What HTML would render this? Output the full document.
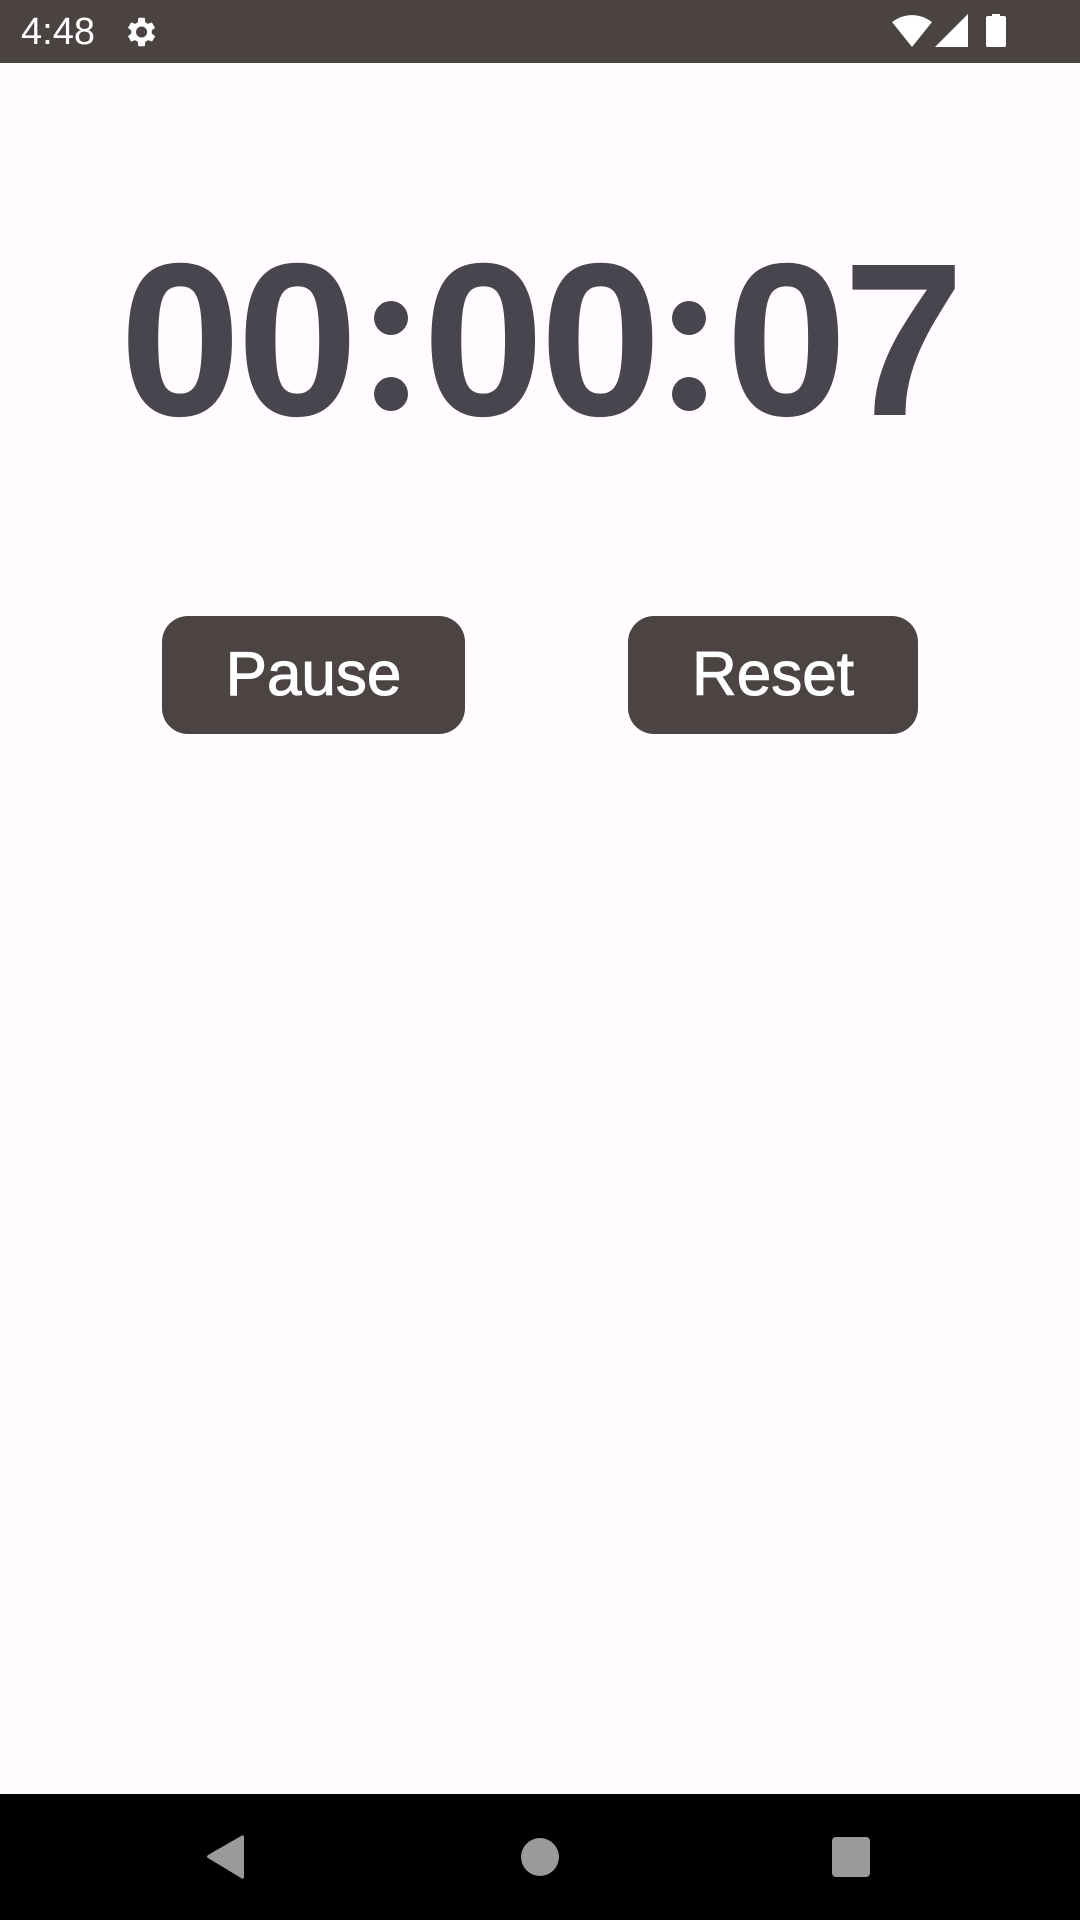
<!DOCTYPE html>
<html><head><meta charset="utf-8"><style>
html,body{margin:0;padding:0;width:1080px;height:1920px;overflow:hidden;background:#fffbfe;font-family:"Liberation Sans",sans-serif;}
.sb{position:absolute;left:0;top:0;width:1080px;height:63px;background:#4a4341;}
.time{position:absolute;left:21px;top:11px;color:#fff;font-size:38px;}
.timer{position:absolute;left:0;width:1080px;top:221px;text-align:center;font-size:218px;font-weight:bold;color:#49454f;letter-spacing:-4px;line-height:240px;}
.c{color:transparent;}
.dot{position:absolute;width:34px;height:34px;border-radius:50%;background:#49454f;}
.btn{position:absolute;top:616px;height:118px;background:#4b4442;border-radius:26px;color:#fff;font-size:62px;text-align:center;line-height:118px;-webkit-text-stroke:1px #fff;}
.nav{position:absolute;left:0;top:1794px;width:1080px;height:126px;background:#000;}
</style></head><body>
<div class="sb">
<div class="time">4:48</div>
<svg style="position:absolute;left:121px;top:13px" width="38" height="38" viewBox="0 0 24 24"><path fill="#fff" d="M19.4 13a7.5 7.5 0 0 0 0-2l2.1-1.6-2-3.5-2.5 1a7.3 7.3 0 0 0-1.7-1L15 3h-4l-.4 2.9a7.3 7.3 0 0 0-1.7 1l-2.5-1-2 3.5L6.5 11a7.5 7.5 0 0 0 0 2l-2.1 1.6 2 3.5 2.5-1a7.3 7.3 0 0 0 1.7 1L11 21h4l.4-2.9a7.3 7.3 0 0 0 1.7-1l2.5 1 2-3.5zM13 15.5a3.5 3.5 0 1 1 0-7 3.5 3.5 0 0 1 0 7z"/></svg>
<svg style="position:absolute;left:890px;top:14px" width="120" height="34" viewBox="0 0 120 34"><path fill="#fff" d="M2 8 Q22 -6 42 8 L22 33 Z"/><path fill="#fff" d="M45 33 L78 0 L78 33 Z"/><rect x="96" y="2" width="20" height="31" rx="2" fill="#fff"/><rect x="102" y="0" width="8" height="4" fill="#fff"/></svg>
</div>
<div class="timer">00<span class="c">:</span>00<span class="c">:</span>07</div>
<div class="dot" style="left:374px;top:301px"></div>
<div class="dot" style="left:374px;top:377px"></div>
<div class="dot" style="left:672px;top:301px"></div>
<div class="dot" style="left:672px;top:377px"></div>
<div class="btn" style="left:162px;width:303px;">Pause</div>
<div class="btn" style="left:628px;width:290px;">Reset</div>
<div class="nav">
<svg style="position:absolute;left:204px;top:40px" width="44" height="46" viewBox="0 0 44 46"><path d="M40 3 L40 43 Q40 46 37 44 L4 24 Q2 23 4 21 L37 2 Q40 0 40 3Z" fill="#9a9a9a"/></svg>
<div style="position:absolute;left:521px;top:44px;width:38px;height:38px;border-radius:50%;background:#9a9a9a;"></div>
<div style="position:absolute;left:832px;top:43px;width:38px;height:40px;border-radius:4px;background:#9a9a9a;"></div>
</div>
</body></html>
